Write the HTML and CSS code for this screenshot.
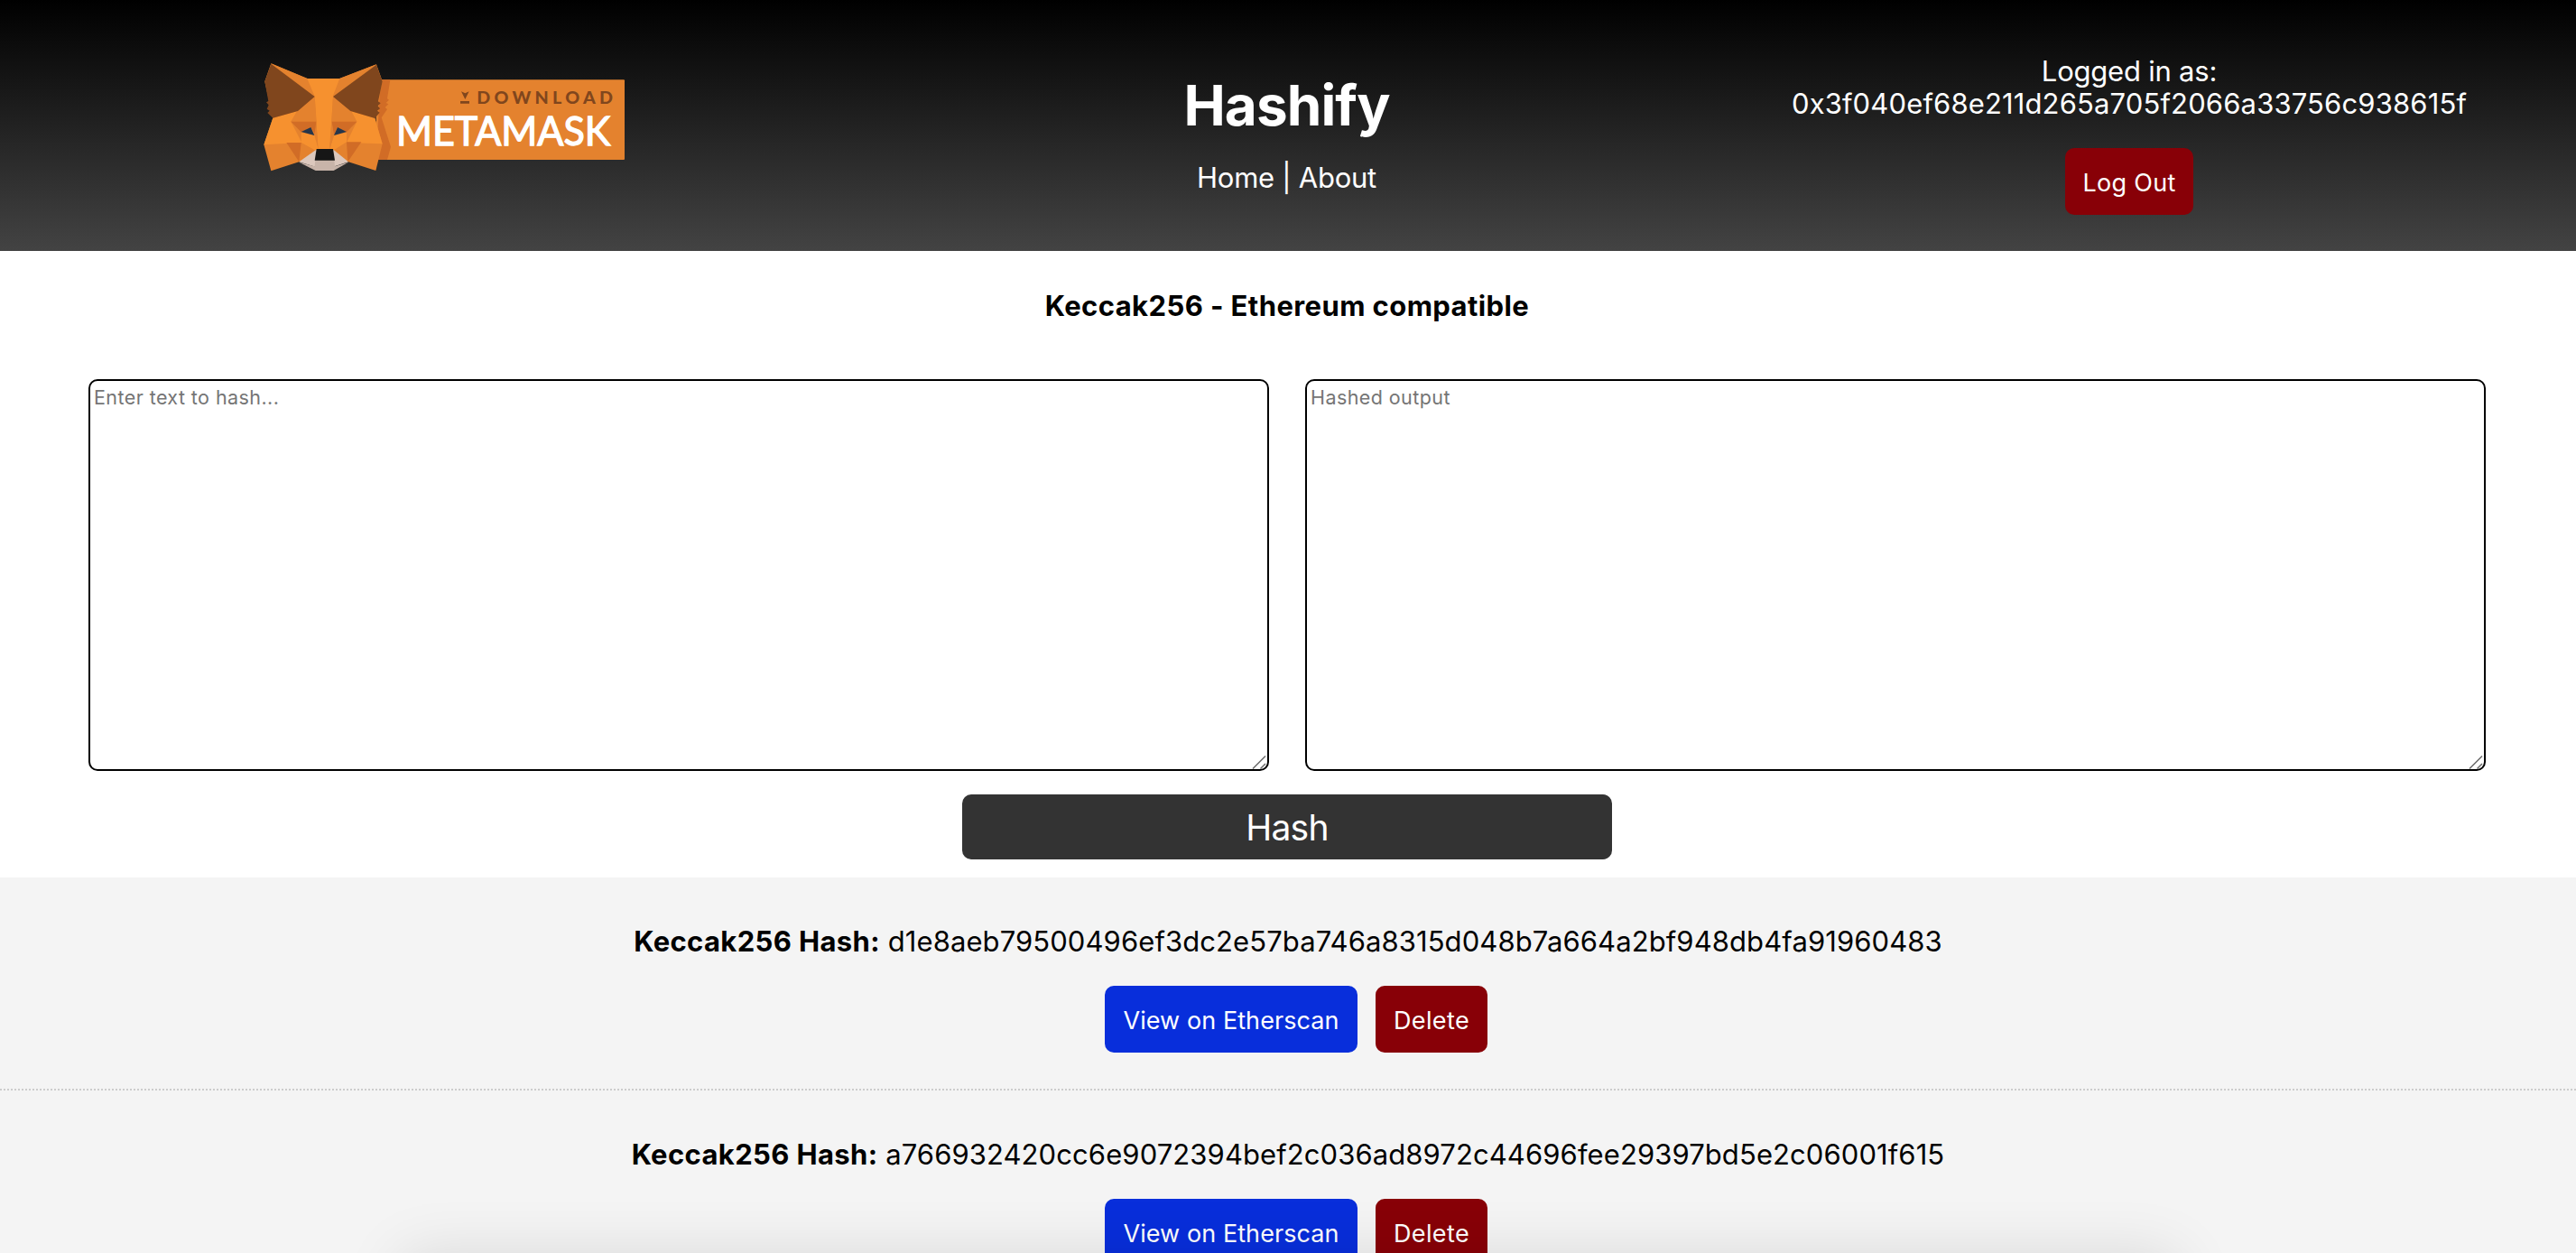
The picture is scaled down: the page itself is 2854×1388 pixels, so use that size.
FILE: index.html
```html
<!DOCTYPE html>
<html lang="en">
<head>
<meta charset="utf-8">
<title>Hashify</title>
<link rel="stylesheet" href="styles.css">
</head>
<body>
<header class="header">
  <a class="logo" href="#">
    <svg class="logo-art" viewBox="60 54 1212 372" role="img" aria-label="Download MetaMask">
      <rect x="440" y="115" width="826" height="266" rx="3" fill="#e4822e"/>
      <path fill="#d16c26" d="M455 115H487L477 178 483 182 473 192 481 196 470 207 477 213 458 241 489 338 477 381H440Z"/>
      <!-- head -->
      <path fill="#e4822e" d="M91 61 212 111H318L441 64 461 120 436 243 461 328 439 417 348 388H184L91 418 67 331 97 242 70 121Z"/>
      <path fill="#f6912f" d="M209 112H320L297 171 292 250 285 345H247L241 250 236 171Z"/>
      <path fill="#e4822e" d="M91 61 211 111 236 171ZM441 64 319 111 296 171Z"/>
      <!-- cheeks -->
      <path fill="#f6912f" d="M97 242 178 219 157 254 193 324 67 331ZM436 243 357 219 376 254 342 324 461 328Z"/>
      <path fill="#f6912f" d="M191 290 240 300 248 346 238 350 191 325ZM342 290 300 300 285 346 298 350 342 325Z"/>
      <path fill="#e4822e" d="M191 324 238 350 184 388ZM342 322 298 350 348 388Z"/>
      <!-- brow -->
      <path fill="#e4822e" d="M236 171 242 255H157L178 219ZM297 171 292 255H376L357 219Z"/>
      <path fill="#d16c26" d="M157 254H241L240 300 223 273 191 289ZM376 254H293L300 300 311 273 342 289Z"/>
      <path fill="#e4822e" d="M235 300 241 255 248 346ZM300 300 292 255 286 346Z"/>
      <path fill="#d16c26" d="M142 324H191L184 388ZM391 322H342L346 388Z"/>
      <!-- ears -->
      <path fill="#80461d" d="M91 62 236 171 180 219 97 242 79 225 86 218 77 212 83 199 75 190 82 186 70 121ZM441 65 297 171 355 219 436 243 452 224 444 218 453 211 446 202 455 193 447 187 461 121Z"/>
      <!-- eyes -->
      <path fill="#25364b" d="M191 288 223 273 235 300ZM342 288 312 273 300 300Z"/>
      <!-- muzzle -->
      <path fill="#dcc8bd" d="M184 388 239 349 300 349 348 388 297 404H238Z"/>
      <path fill="#c8b4a9" d="M184 389 236 403 238 380H301L303 403 348 389 299 417H239Z"/>
      <path fill="#161616" d="M242 345H297L303 383H236Z"/>
      <!-- download mark -->
      <path fill="#80461d" d="M723 154 736 160 749 154 736 180ZM720 186H750V194H720Z"/>
      <text class="logo-small" x="775" y="195" textLength="452" lengthAdjust="spacing">DOWNLOAD</text>
      <text class="logo-big" x="507" y="334" textLength="712" lengthAdjust="spacingAndGlyphs">METAMASK</text>
    </svg>
  </a>
  <div class="brand">
    <h1 class="title">Hashify</h1>
    <nav class="nav"><a href="#">Home</a> | <a href="#">About</a></nav>
  </div>
  <div class="account">
    <div class="account-label">Logged in as:</div>
    <div class="account-address">0x3f040ef68e211d265a705f2066a33756c938615f</div>
    <button class="button button-red button-logout">Log Out</button>
  </div>
</header>

<main class="hasher">
  <h2 class="subtitle">Keccak256 - Ethereum compatible</h2>
  <div class="fields">
    <div class="field">
      <textarea class="input" placeholder="Enter text to hash..."></textarea>
      <svg class="grip" viewBox="0 0 16 16"><path d="M1 15.500 15 1.500M9.500 15.500 15 10"/></svg>
    </div>
    <div class="field">
      <textarea class="input" placeholder="Hashed output" readonly></textarea>
      <svg class="grip" viewBox="0 0 16 16"><path d="M1 15.500 15 1.500M9.500 15.500 15 10"/></svg>
    </div>
  </div>
  <button class="hash-button">Hash</button>
</main>

<section class="results">
  <article class="result">
    <p class="hash"><strong>Keccak256 Hash:</strong> d1e8aeb79500496ef3dc2e57ba746a8315d048b7a664a2bf948db4fa91960483</p>
    <div class="actions">
      <button class="button button-blue">View on Etherscan</button>
      <button class="button button-red button-delete">Delete</button>
    </div>
  </article>
  <article class="result">
    <p class="hash"><strong>Keccak256 Hash:</strong> a766932420cc6e9072394bef2c036ad8972c44696fee29397bd5e2c06001f615</p>
    <div class="actions">
      <button class="button button-blue">View on Etherscan</button>
      <button class="button button-red button-delete">Delete</button>
    </div>
  </article>
</section>
<div class="bottom-shadow"></div>
</body>
</html>
```
FILE: styles.css
```css
* { box-sizing: border-box; }

body {
  margin: 0;
  height: 1388px;
  overflow: hidden;
  background: #fff;
  color: #000;
  font: 31px/36px Inter, "Liberation Sans", sans-serif;
}

button { border: 0; font-family: inherit; }

.header {
  display: grid;
  grid-template-columns: 984px 885px 1fr;
  height: 278px;
  padding-right: 5px;
  background: linear-gradient(#000, #434343);
  color: #fff;
  text-align: center;
}

.logo { padding-top: 68px; padding-left: 290px; text-align: left; }
.logo-art { display: block; width: 404px; height: 124px; overflow: visible; }
.logo-small { font: 900 59px Lato, sans-serif; fill: #80461d; }
.logo-big {
  font: 400 134px Lato, sans-serif;
  fill: #fff;
  stroke: #fff;
  stroke-width: 4;
}

.brand { padding: 79px 2px 0 0; }
.title {
  margin: 0 0 24px;
  font-size: 62px;
  font-weight: 700;
  line-height: 76px;
  letter-spacing: -0.9px;
}
.nav { letter-spacing: -0.26px; }
.nav a { color: inherit; text-decoration: none; }

.account { padding-top: 61px; }
.account-label { letter-spacing: -0.22px; }
.account-address { letter-spacing: 0.145px; }

.button {
  height: 74px;
  padding: 2px 0 0;
  border-radius: 10px;
  color: #fff;
  font-size: 27px;
}
.button-red { background: #880007; }
.button-blue { width: 280px; background: #082edb; letter-spacing: 0.07px; }
.button-logout { width: 142px; margin-top: 31px; letter-spacing: 0.3px; }
.button-delete { width: 124px; letter-spacing: 0.38px; }

.hasher {
  display: flex;
  flex-direction: column;
  align-items: center;
  height: 694px;
  padding: 43px 100px 0 98px;
}
.subtitle {
  margin: 0 0 63px;
  font-size: 31px;
  font-weight: 700;
  letter-spacing: 0.41px;
}
.fields { display: flex; gap: 40px; width: 100%; margin-bottom: 26px; }
.field { position: relative; flex: 1; height: 434px; }
.input {
  display: block;
  width: 100%;
  height: 100%;
  padding: 5px 4px;
  border: 2px solid #000;
  border-radius: 10px;
  outline: 0;
  resize: none;
  background: #fff;
  font: 21.5px/26px Inter, sans-serif;
  letter-spacing: 0.42px;
}
.input::placeholder { color: #757575; }
.grip {
  position: absolute;
  right: 3px;
  bottom: 2px;
  width: 16px;
  height: 16px;
  fill: none;
  stroke: #6b6b6b;
  stroke-width: 1.5;
}
.hash-button {
  width: 720px;
  height: 72px;
  padding: 0;
  border-radius: 10px;
  background: #333;
  color: #fff;
  font-size: 39px;
  letter-spacing: -0.8px;
}

.results { background: #f4f4f4; }
.result {
  height: 236px;
  padding-top: 53px;
  border-bottom: 2px dotted #ccc;
  text-align: center;
}
.hash { margin: 0 0 31px; letter-spacing: 0.09px; }
.hash strong { font-weight: 700; letter-spacing: 0.36px; }
.actions { display: flex; justify-content: center; gap: 20px; padding-left: 18px; }

/* soft shade rising from below the fold */
.bottom-shadow {
  position: fixed;
  top: 1392px;
  left: 446px;
  width: 1966px;
  height: 300px;
  box-shadow: 0 0 64px rgba(0, 0, 0, 0.12);
  pointer-events: none;
}
```
